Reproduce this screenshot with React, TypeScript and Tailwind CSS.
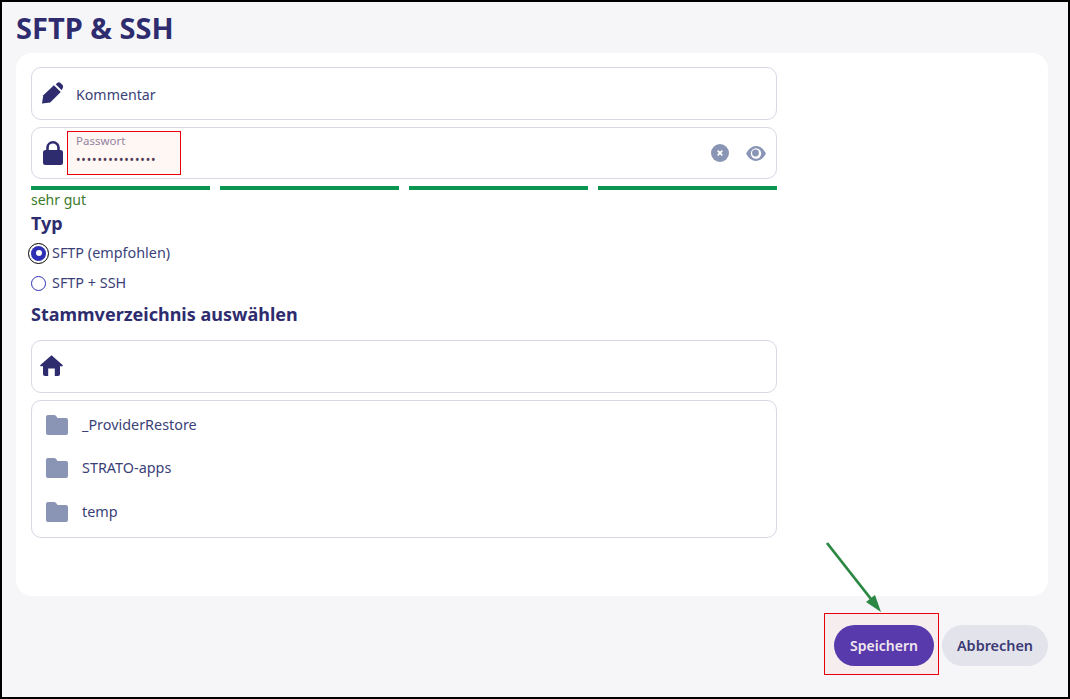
const folders = ["_ProviderRestore", "STRATO-apps", "temp"];

function PencilIcon() {
  return (
    <svg viewBox="0 0 24 24" className="mb-[2px] h-[22px] w-[23px] fill-current">
      <path d="M0.5 23.5L2 14.5L13.5 3.5L21 11L9.5 22.3Z" />
      <path d="M15.5 2.5L17.5 0.8Q19 0 20.5 0.8L23.2 3.5Q24 5 23.2 6.5L22 9Z" />
    </svg>
  );
}

function LockIcon() {
  return (
    <svg viewBox="0 0 20 24" className="h-[24px] w-[20px]">
      <rect x="0" y="9" width="20" height="15" rx="2.5" fill="currentColor" />
      <path d="M4.5 10V6.5a5.5 5.2 0 0 1 11 0V10" stroke="currentColor" strokeWidth="2.6" fill="none" />
    </svg>
  );
}

function EyeIcon() {
  return (
    <svg viewBox="0 0 20 15" className="h-[15px] w-[20px]">
      <path d="M0 7.5Q4 0 10 0T20 7.5Q16 15 10 15T0 7.5Z" fill="#8a94b4" />
      <circle cx="10" cy="7.5" r="5.2" fill="#fff" />
      <circle cx="9.5" cy="7" r="3.4" fill="#8a94b4" />
    </svg>
  );
}

function ClearIcon() {
  return (
    <svg viewBox="0 0 18 18" className="h-[18px] w-[18px]">
      <circle cx="9" cy="9" r="9" fill="#8a94b4" />
      <path d="M6.7 6.7l4.6 4.6M11.3 6.7l-4.6 4.6" stroke="#fff" strokeWidth="1.8" />
    </svg>
  );
}

function HomeIcon() {
  return (
    <svg viewBox="0 0 23 21" className="mb-[2px] h-[21px] w-[23px] fill-current">
      <path d="M11.5 0.3L22.6 10Q23.3 11.3 21.7 11.3H20V19Q20 21 18 21H14.8V13.5H8.2V21H5Q3 21 3 19V11.3H1.3Q-0.3 11.3 0.4 10Z" />
    </svg>
  );
}

function FolderIcon() {
  return (
    <svg viewBox="0 0 22 20" className="h-[20px] w-[22px] fill-[#8a94b4]">
      <path d="M2 0H8.5Q9.5 0 10.5 1.5L11.5 3H20Q22 3 22 5V18Q22 20 20 20H2Q0 20 0 18V2Q0 0 2 0Z" />
    </svg>
  );
}

export default function App() {
  return (
    <div className="relative flex h-[699px] w-[1070px] flex-col overflow-hidden border-2 border-black bg-[#f6f6f9] font-['Noto_Sans',sans-serif] text-[#2e2c6f]">
      <h1 className="ml-[14px] mt-[7px] h-[44px] text-[29px] font-bold leading-[38px]">SFTP &amp; SSH</h1>

      <div className="ml-[14px] h-[543px] w-[1032px] rounded-2xl bg-white px-[15px] pt-[14px]">
        <div className="flex w-[746px] flex-col">
          <div className="flex h-[53px] items-center rounded-[10px] border border-[#d9d7e6] pl-[9px]">
            <PencilIcon />
            <span className="ml-[12px] mt-[2px] text-[14.2px] text-[#3b3f78]">Kommentar</span>
          </div>

          <div className="relative mt-[7px] flex h-[52px] items-center rounded-[10px] border border-[#d9d7e6] pl-[11px]">
            <LockIcon />
            <div className="mb-[6px] ml-[13px] flex flex-col">
              <span className="text-[11.5px] leading-[14px] text-[#8f86a8]">Passwort</span>
              <span className="mt-[5px] text-xs leading-[14px] tracking-[0.85px] text-[#4a3a5c]">•••••••••••••••</span>
            </div>
            <div className="ml-auto mr-[10px] flex items-center gap-[17px]">
              <ClearIcon />
              <EyeIcon />
            </div>
          </div>

          <div className="mt-[7px] flex gap-[10px]">
            <div className="h-1 flex-1 bg-[#0a9650]" />
            <div className="h-1 flex-1 bg-[#0a9650]" />
            <div className="h-1 flex-1 bg-[#0a9650]" />
            <div className="h-1 flex-1 bg-[#0a9650]" />
          </div>
          <span className="text-sm leading-[19px] text-[#3c7a2a]">sehr gut</span>

          <h2 className="mt-[2px] text-lg font-bold leading-[24px]">Typ</h2>

          <div className="mt-[3px] flex h-[30px] items-center">
            <span className="flex h-[15px] w-[15px] items-center justify-center rounded-full bg-[#2f2fb5] outline outline-[1.5px] outline-offset-[2px] outline-black">
              <span className="h-[6px] w-[6px] rounded-full bg-white" />
            </span>
            <span className="ml-[6px] text-[14.4px] text-[#3b3f78]">SFTP (empfohlen)</span>
          </div>
          <div className="flex h-[30px] items-center">
            <span className="h-[15px] w-[15px] rounded-full border-[1.4px] border-[#2f2fb5]" />
            <span className="ml-[6px] text-[14.4px] text-[#3b3f78]">SFTP + SSH</span>
          </div>

          <h2 className="mt-[4px] text-lg font-bold leading-[24px]">Stammverzeichnis auswählen</h2>

          <div className="mt-[14px] flex h-[53px] items-center rounded-[10px] border border-[#d9d7e6] pl-[8px]">
            <HomeIcon />
          </div>

          <div className="mt-[7px] flex h-[138px] flex-col rounded-[10px] border border-[#d9d7e6] pl-[14px] pt-[2px]">
            {folders.map((name) => (
              <div key={name} className="flex h-[43.5px] items-center">
                <FolderIcon />
                <span className="ml-[14px] text-[14.4px] text-[#3b3f78]">{name}</span>
              </div>
            ))}
          </div>
        </div>
      </div>

      <div className="mr-[20px] mt-[29px] flex justify-end gap-[8px]">
        <button className="h-[41px] w-[100px] rounded-full bg-[#513ab4] text-sm font-semibold text-[#f2f0fa]">Speichern</button>
        <button className="h-[41px] w-[106px] rounded-full bg-[#e3e3ec] text-[14.4px] font-semibold text-[#3b3a74]">Abbrechen</button>
      </div>

      {/* annotations drawn over the screenshot */}
      <div className="absolute left-[65px] top-[129px] h-[44px] w-[114px] border border-red-600 bg-[#ff4000]/[0.045]" />
      <div className="absolute left-[822px] top-[611px] h-[62px] w-[115px] border border-red-600 bg-[#ff4000]/[0.045]" />
      <svg className="absolute left-[815px] top-[530px]" width="75" height="90" viewBox="0 0 75 90">
        <path d="M10 11L54 67" stroke="#2b8742" strokeWidth="2.8" fill="none" />
        <path d="M64 80L49 70L58 63Z" fill="#2b8742" />
      </svg>
    </div>
  );
}
